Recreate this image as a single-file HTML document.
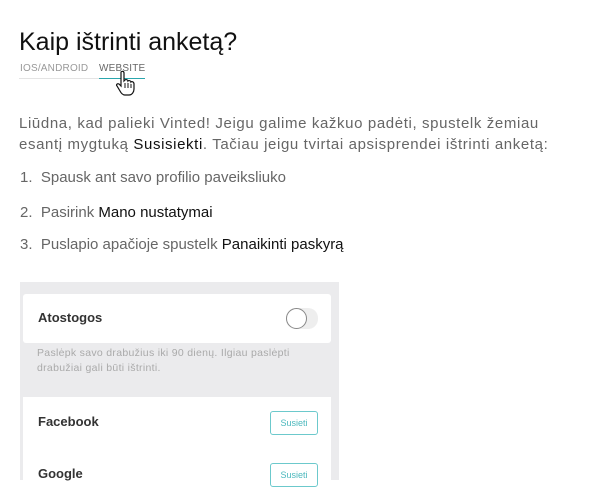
<!DOCTYPE html>
<html><head><style>
body{margin:0;width:600px;height:480px;background:#fff;font-family:"Liberation Sans",sans-serif;position:relative;overflow:hidden;color:#111}
.a{position:absolute;white-space:nowrap}
h1{position:absolute;left:19px;top:28px;margin:0;font-size:25px;font-weight:normal;color:#111}
.tab{font-size:10px;color:#999;letter-spacing:0.2px}
p{margin:0}
.t{font-size:15px;color:#666}
.t b{font-weight:normal;color:#111}
</style></head><body>
<h1>Kaip ištrinti anketą?</h1>
<div class="a tab" style="left:20px;top:63px">IOS/ANDROID</div>
<div class="a tab" style="left:99px;top:63px;color:#666">WEBSITE</div>
<div class="a" style="left:19px;top:78px;width:126px;height:1px;background:#e4e4e4"></div>
<div class="a" style="left:99px;top:78px;width:46px;height:1px;background:#2aa6ad"></div>
<div class="a t" style="left:19px;top:113px;line-height:21px;letter-spacing:0.62px">Liūdna, kad palieki Vinted! Jeigu galime kažkuo padėti, spustelk žemiau<br>esantį mygtuką <b>Susisiekti</b>. Tačiau jeigu tvirtai apsisprendei ištrinti anketą:</div>
<div class="a t" style="left:20px;top:169px">1.&nbsp; Spausk ant savo profilio paveiksliuko</div>
<div class="a t" style="left:20px;top:204px">2.&nbsp; Pasirink <b>Mano nustatymai</b></div>
<div class="a t" style="left:20px;top:236px">3.&nbsp; Puslapio apačioje spustelk <b>Panaikinti paskyrą</b></div>
<div class="a" style="left:20px;top:282px;width:319px;height:198px;background:#ebebed"></div>
<div class="a" style="left:23px;top:294px;width:308px;height:49px;background:#fff;border-radius:3px"></div>
<div class="a" style="left:38px;top:310px;font-size:13px;font-weight:bold;color:#333">Atostogos</div>
<div class="a" style="left:286px;top:308px;width:32px;height:21px;border-radius:10px;background:#eee"></div>
<div class="a" style="left:286px;top:308px;width:19px;height:19px;border-radius:50%;background:#fff;border:1px solid #888"></div>
<div class="a" style="left:37px;top:346px;font-size:10.5px;letter-spacing:0.3px;color:#aaa;line-height:15px">Paslėpk savo drabužius iki 90 dienų. Ilgiau paslėpti<br>drabužiai gali būti ištrinti.</div>
<div class="a" style="left:23px;top:397px;width:308px;height:83px;background:#fff"></div>
<div class="a" style="left:38px;top:414px;font-size:13px;font-weight:bold;color:#333">Facebook</div>
<div class="a" style="left:270px;top:411px;width:46px;height:22px;border:1px solid #6cc9cc;border-radius:3px;font-size:9px;color:#4bb8bd;text-align:center;line-height:22px">Susieti</div>
<div class="a" style="left:38px;top:466px;font-size:13px;font-weight:bold;color:#333">Google</div>
<div class="a" style="left:270px;top:463px;width:46px;height:22px;border:1px solid #6cc9cc;border-radius:3px;font-size:9px;color:#4bb8bd;text-align:center;line-height:22px">Susieti</div>
<svg class="a" style="left:115px;top:70px" width="22" height="26" viewBox="0 0 22 26"><path d="M6 2c1-1 3-1 3 1v8l1-1c1-1 3 0 3 1 1-1 3 0 3 1 1-1 3 0 3 2v5c0 3-2 6-5 6h-4c-2 0-4-2-5-4l-3-5c-1-1 0-3 2-2l2 2V3z" fill="#fff" stroke="#111" stroke-width="1.2"/><path d="M10 13v5M13 13v5M16 14v4" stroke="#111" stroke-width="1"/></svg>
</body></html>
